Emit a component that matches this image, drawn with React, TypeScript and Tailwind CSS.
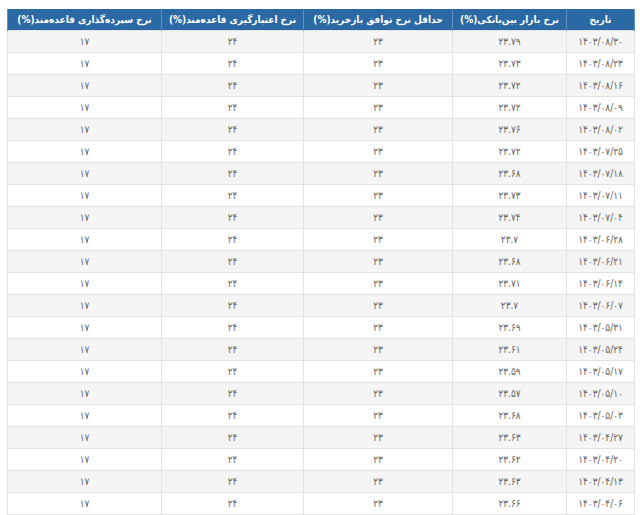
const HEADERS = [
  'تاریخ',
  'نرخ بازار بین‌بانکی(%)',
  'حداقل نرخ توافق بازخرید(%)',
  'نرخ اعتبارگیری قاعده‌مند(%)',
  'نرخ سپرده‌گذاری قاعده‌مند(%)',
];

const COL_WIDTHS = ['w-[68px]', 'w-[114px]', 'w-[149px]', 'w-[142px]', 'w-[154px]'];

const ROWS: [string, string][] = [
  ['۱۴۰۳/۰۸/۳۰', '۲۳.۷۹'],
  ['۱۴۰۳/۰۸/۲۳', '۲۳.۷۳'],
  ['۱۴۰۳/۰۸/۱۶', '۲۳.۷۲'],
  ['۱۴۰۳/۰۸/۰۹', '۲۳.۷۲'],
  ['۱۴۰۳/۰۸/۰۲', '۲۳.۷۶'],
  ['۱۴۰۳/۰۷/۲۵', '۲۳.۷۲'],
  ['۱۴۰۳/۰۷/۱۸', '۲۳.۶۸'],
  ['۱۴۰۳/۰۷/۱۱', '۲۳.۷۳'],
  ['۱۴۰۳/۰۷/۰۴', '۲۳.۷۴'],
  ['۱۴۰۳/۰۶/۲۸', '۲۳.۷'],
  ['۱۴۰۳/۰۶/۲۱', '۲۳.۶۸'],
  ['۱۴۰۳/۰۶/۱۴', '۲۳.۷۱'],
  ['۱۴۰۳/۰۶/۰۷', '۲۳.۷'],
  ['۱۴۰۳/۰۵/۳۱', '۲۳.۶۹'],
  ['۱۴۰۳/۰۵/۲۴', '۲۳.۶۱'],
  ['۱۴۰۳/۰۵/۱۷', '۲۳.۵۹'],
  ['۱۴۰۳/۰۵/۱۰', '۲۳.۵۷'],
  ['۱۴۰۳/۰۵/۰۳', '۲۳.۶۸'],
  ['۱۴۰۳/۰۴/۲۷', '۲۳.۶۳'],
  ['۱۴۰۳/۰۴/۲۰', '۲۳.۶۲'],
  ['۱۴۰۳/۰۴/۱۳', '۲۳.۶۳'],
  ['۱۴۰۳/۰۴/۰۶', '۲۳.۶۶'],
];

export default function App() {
  return (
    <div className="w-[640px] h-[515px] overflow-hidden bg-white pt-[9px] pl-[7px] font-['DejaVu_Sans_Condensed','DejaVu_Sans',sans-serif]">
      <table dir="rtl" className="table-fixed border-collapse w-[627px]">
        <colgroup>
          {COL_WIDTHS.map((w, i) => (
            <col key={i} className={w} />
          ))}
        </colgroup>
        <thead>
          <tr className="h-[21px] bg-[#2b69a5]">
            {HEADERS.map((h) => (
              <th
                key={h}
                className="border-x border-[#5d8fbf] p-0 text-center text-[10px] font-bold text-white whitespace-nowrap"
              >
                {h}
              </th>
            ))}
          </tr>
        </thead>
        <tbody>
          {ROWS.map(([date, rate], i) => (
            <tr key={date} className={`h-[22px] ${i % 2 === 0 ? 'bg-[#f5f5f5]' : 'bg-white'}`}>
              {[date, rate, '۲۳', '۲۴', '۱۷'].map((v, j) => (
                <td
                  key={j}
                  className="border border-[#e2e2e2] p-0 text-center text-[10px] text-[#666]"
                >
                  {v}
                </td>
              ))}
            </tr>
          ))}
        </tbody>
      </table>
    </div>
  );
}
